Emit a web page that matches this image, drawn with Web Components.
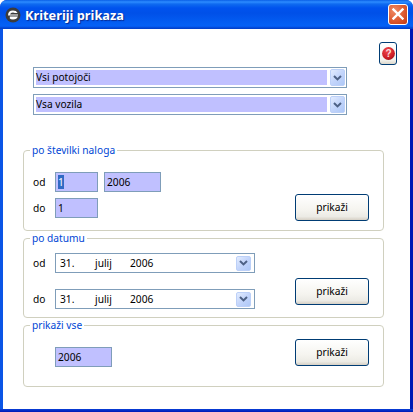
<!DOCTYPE html>
<html lang="sl">
<head>
<meta charset="utf-8">
<title>Kriteriji prikaza</title>
<style>
html,body{margin:0;padding:0;background:#fff}
body{font:10.2px "Noto Sans","Liberation Sans",Arial,sans-serif;color:#000}
</style>
</head>
<body>
<xp-window heading="Kriteriji prikaza">
  <xp-help></xp-help>
  <xp-stack>
    <xp-select wide>Vsi potojoči</xp-select>
    <xp-select wide>Vsa vozila</xp-select>
  </xp-stack>
  <xp-groups>
    <xp-group legend="po številki naloga" style="--pt:21px;--pb:9px">
      <xp-rows style="--gap:6px;padding-bottom:3px">
        <xp-row label="od"><xp-field w="43" selected>1</xp-field><xp-field w="57">2006</xp-field></xp-row>
        <xp-row label="do"><xp-field w="43">1</xp-field></xp-row>
      </xp-rows>
      <xp-button style="align-self:flex-end">prikaži</xp-button>
    </xp-group>
    <xp-group legend="po datumu" style="--pt:14px;--pb:8px">
      <xp-rows style="--gap:16px">
        <xp-row label="od"><xp-date day="31." month="julij" year="2006"></xp-date></xp-row>
        <xp-row label="do"><xp-date day="31." month="julij" year="2006"></xp-date></xp-row>
      </xp-rows>
      <xp-button style="margin-top:25px;align-self:flex-start">prikaži</xp-button>
    </xp-group>
    <xp-group legend="prikaži vse" style="--pt:13px;--pb:19px">
      <xp-rows style="margin-top:8px">
        <xp-row label=""><xp-field w="57">2006</xp-field></xp-row>
      </xp-rows>
      <xp-button style="align-self:flex-start">prikaži</xp-button>
    </xp-group>
  </xp-groups>
</xp-window>
<script>
const chevron = `<svg width="9" height="6" viewBox="0 0 9 6" aria-hidden="true"><path d="M1 1 L4.5 4.4 L8 1" fill="none" stroke="#4d6185" stroke-width="2"/></svg>`;
const arrowCss = `
  .arrow{flex:none;display:flex;align-items:center;justify-content:center;box-sizing:border-box;
    background:linear-gradient(135deg,#e3ecfe,#c3d5fb 50%,#aec8f7);border:1px solid #bcd0f8;border-radius:2px}`;
function define(name, render){
  customElements.define(name, class extends HTMLElement{
    constructor(){super();this.attachShadow({mode:"open"});}
    connectedCallback(){this.shadowRoot.innerHTML = render(this);}
  });
}
define("xp-window", el => `<style>
  :host{display:flex;flex-direction:column;width:413px;height:412px;box-sizing:border-box;
    background:#0831d9;border-radius:7px 7px 0 0;overflow:hidden;
    font:10.2px "Noto Sans","Liberation Sans",Arial,sans-serif}
  .bar{flex:none;height:29px;display:flex;align-items:center;box-sizing:border-box;padding:0 5px 1px 5px;gap:3px;
    background:linear-gradient(180deg,#0a5fe6 0,#2d8cff 2px,#0f6bf0 4px,#0053ee 8px,#0050e8 45%,#0460f4 85%,#0560f6 90%,#0347d4 96%,#003dc7 100%);
    color:#fff;font:bold 12.8px "Noto Sans","Liberation Sans",Arial,sans-serif;text-shadow:1px 1px 1px #0a2a90}
  .title{flex:1;padding:1px 0 0 1px}
  .icon{flex:none;margin-top:2px}
  .close{flex:none;width:20px;height:21px;box-sizing:border-box;border:1px solid #fff;border-radius:3px;
    background:radial-gradient(circle at 30% 30%,#ef8a64,#dd5a30 55%,#c03a14);display:flex;align-items:center;justify-content:center}
  .body{flex:none;height:380px;margin:0 3px;box-sizing:border-box;background:#fff;
    padding:13px 0 0 20px;display:flex;flex-direction:column;box-shadow:-3px 0 0 #0a55e6,3px 0 0 #0019b4}
  .foot{flex:1;background:linear-gradient(#0a40d8,#0019b4)}
</style>
<div class="bar">
  <svg class="icon" width="16" height="16" viewBox="0 0 16 16" aria-hidden="true">
    <circle cx="8" cy="8" r="7.5" fill="#3c3c3c"/>
    <path d="M3 8.6 Q3 3.6 8 3.6 Q11.4 3.6 12.6 6 H9.8 Q9 5.4 8 5.4 Q5.4 5.4 5 7.4 H13 V8.6 Z" fill="#fff"/>
    <path d="M4.8 9.6 H12.8 Q12 12.6 8 12.6 Q5.6 12.6 4.8 11.6 Z" fill="#fff"/>
  </svg>
  <span class="title">${el.getAttribute("heading")}</span>
  <span class="close"><svg width="12" height="12" viewBox="0 0 12 12" aria-hidden="true"><path d="M1.5 1.5 L10.5 10.5 M10.5 1.5 L1.5 10.5" stroke="#fff" stroke-width="2.4" stroke-linecap="square"/></svg></span>
</div>
<div class="body"><slot></slot></div>
<div class="foot"></div>`);
define("xp-help", () => `<style>
  :host{display:block;align-self:flex-end;width:18px;height:23px;margin-right:13px;box-sizing:border-box;
    border:1px solid #003c74;border-radius:3px;background:linear-gradient(180deg,#fff,#f4f3ee 80%,#dcd8cc)}
  svg{display:block;margin:4px 0 0 2px}
  text{font:bold 10px "Liberation Sans",Arial,sans-serif;fill:#f8dcdc}
</style>
<svg width="13" height="13" viewBox="0 0 13 13">
  <defs><radialGradient id="b" cx=".4" cy=".3" r=".8"><stop offset="0" stop-color="#f0484c"/><stop offset=".7" stop-color="#cc1c24"/><stop offset="1" stop-color="#8e1018"/></radialGradient></defs>
  <circle cx="6.5" cy="6.5" r="6.4" fill="url(#b)"/>
  <text x="6.5" y="10" text-anchor="middle">?</text>
</svg>`);
define("xp-stack", () => `<style>
  :host{display:flex;flex-direction:column;gap:6px;margin:2px 0 0 10px}
  slot{display:contents}
</style><slot></slot>`);
define("xp-select", () => `<style>
  :host{display:flex;width:314px;height:21px;box-sizing:border-box;border:1px solid #7f9db9;background:#fff;
    padding:1px 1px 1px 2px;gap:3px;align-items:stretch}
  .val{flex:1;margin:1px 0;background:#c0c0ff;line-height:15px;white-space:nowrap}
  .arrow{width:15px}
  ${arrowCss}
</style><div class="val"><slot></slot></div><div class="arrow">${chevron}</div>`);
define("xp-groups", () => `<style>
  :host{display:flex;flex-direction:column;gap:7px;margin-top:35px;width:361px}
  slot{display:contents}
</style><slot></slot>`);
define("xp-group", el => `<style>
  :host{display:flex;position:relative;box-sizing:border-box;border:1px solid #d0d0bf;border-radius:4px;
    justify-content:space-between;padding:var(--pt) 14px var(--pb) 9px}
  .legend{position:absolute;left:6px;top:-7px;background:#fff;padding:0 2px;color:#0046d5;line-height:13px;white-space:nowrap}
  slot{display:contents}
</style><span class="legend">${el.getAttribute("legend")}</span><slot></slot>`);
define("xp-rows", () => `<style>
  :host{display:flex;flex-direction:column;gap:var(--gap,0);}
  slot{display:contents}
</style><slot></slot>`);
define("xp-row", el => `<style>
  :host{display:flex;align-items:center;height:20px}
  .l{flex:none;width:22px;line-height:20px}
  .c{display:flex;gap:6px}
</style><span class="l">${el.getAttribute("label")}</span><div class="c"><slot></slot></div>`);
define("xp-field", el => `<style>
  :host{display:block;width:${el.getAttribute("w")}px;height:20px;box-sizing:border-box;border:1px solid #7f9db9;
    background:#c0c0ff;padding:2px 0 0 2px;line-height:14px;white-space:nowrap}
  .sel{display:inline-block;background:#316ac5;color:#fff;width:6px}
</style>${el.hasAttribute("selected") ? `<span class="sel"><slot></slot></span>` : `<slot></slot>`}`);
define("xp-date", el => `<style>
  :host{display:flex;width:200px;height:20px;box-sizing:border-box;border:1px solid #7f9db9;background:#fff;
    align-items:center;padding:0 3px 0 4px;line-height:18px}
  span{flex:none}
  .d{width:35px}.m{width:35px}.y{flex:1}
  .arrow{width:15px;height:15px}
  ${arrowCss}
</style><span class="d">${el.getAttribute("day")}</span><span class="m">${el.getAttribute("month")}</span><span class="y">${el.getAttribute("year")}</span><div class="arrow">${chevron}</div>`);
define("xp-button", () => `<style>
  :host{display:flex;flex:none;align-items:center;justify-content:center;width:74px;height:27px;box-sizing:border-box;
    border:1px solid #003c74;border-radius:3px;background:linear-gradient(180deg,#fff,#f5f4ef 60%,#ecebe5 86%,#d6d0c5);
    padding-bottom:1px}
</style><slot></slot>`);
</script>
</body>
</html>
